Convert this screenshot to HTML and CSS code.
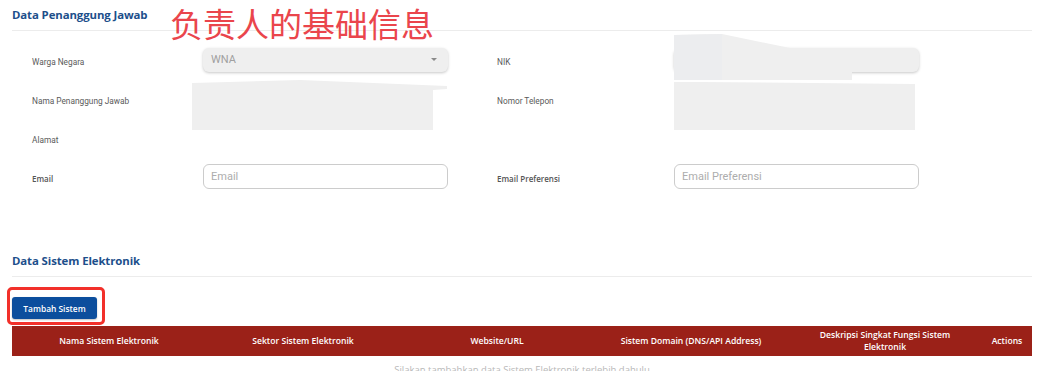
FILE: index.html
```html
<!DOCTYPE html>
<html lang="id">
<head>
<meta charset="utf-8">
<title>Data Penanggung Jawab</title>
<link rel="stylesheet" href="styles.css">
</head>
<body>
<div class="page">
  <section class="section">
    <div class="section-head">
      <h2 class="section-title">Data Penanggung Jawab</h2>
    </div>
    <div class="form-grid">
      <div class="label">Warga Negara</div>
      <div class="field">
        <div class="select"><span class="select-value">WNA</span><span class="caret"></span></div>
      </div>
      <div class="label">NIK</div>
      <div class="field"><div class="select"></div></div>

      <div class="label">Nama Penanggung Jawab</div>
      <div class="field"></div>
      <div class="label">Nomor Telepon</div>
      <div class="field"></div>

      <div class="label">Alamat</div>
      <div class="field"></div>
      <div class="label"></div>
      <div class="field"></div>

      <div class="label label-strong">Email</div>
      <div class="field"><div class="input">Email</div></div>
      <div class="label label-strong">Email Preferensi</div>
      <div class="field"><div class="input">Email Preferensi</div></div>
    </div>
  </section>

  <section class="section section-second">
    <div class="section-head">
      <h2 class="section-title">Data Sistem Elektronik</h2>
    </div>
    <div class="highlight">
      <button class="btn-primary" type="button">Tambah Sistem</button>
    </div>
    <div class="table">
      <div class="thead">
        <div class="th">Nama Sistem Elektronik</div>
        <div class="th">Sektor Sistem Elektronik</div>
        <div class="th">Website/URL</div>
        <div class="th">Sistem Domain (DNS/API Address)</div>
        <div class="th">Deskripsi Singkat Fungsi Sistem Elektronik</div>
        <div class="th">Actions</div>
      </div>
      <div class="empty">Silakan tambahkan data Sistem Elektronik terlebih dahulu</div>
    </div>
  </section>
</div>

<div class="annotation">负责人的基础信息</div>

<svg class="redaction" width="1040" height="371" viewBox="0 0 1040 371" aria-hidden="true">
  <polygon class="blot" points="192,83 300,80 447,86 447,89 433,90 433,130 192,130"/>
  <polygon class="blot" points="674,35 722,34 790,48 674,48"/>
  <polygon class="blot" points="674,72 852,72 852,80 674,80"/>
  <polygon class="blot-cool" points="674,35 722,34 722,80 674,80"/>
  <polygon class="blot" points="674,82 700,82 915,84 915,130 674,130"/>
</svg>
</body>
</html>
```

FILE: styles.css
```css
* {
  box-sizing: border-box;
}

html, body {
  margin: 0;
  padding: 0;
  background: #ffffff;
}

body {
  font-family: Roboto, "Liberation Sans", Arial, sans-serif;
  width: 1040px;
  height: 371px;
  overflow: hidden;
  position: relative;
}

.page {
  padding: 0 8px 0 12px;
}

.section-head {
  height: 31px;
  display: flex;
  align-items: center;
  border-bottom: 1px solid #ececec;
  padding-bottom: 2px;
}

.section-title {
  margin: 0;
  font-family: "Open Sans", "Liberation Sans", sans-serif;
  font-weight: 700;
  font-size: 11.4px;
  color: #1d4f8b;
  letter-spacing: -0.1px;
}

.form-grid {
  display: grid;
  grid-template-columns: 122px 245px 128px 245px;
  grid-auto-rows: 39px;
  column-gap: 49px;
  padding: 11px 0 0 20px;
}

.label {
  display: flex;
  align-items: center;
  font-size: 8.3px;
  color: #5a5a5a;
}

.label-strong {
  font-family: "Open Sans", "Liberation Sans", sans-serif;
  font-weight: 600;
  font-size: 8px;
  color: #555;
}

.field {
  display: flex;
  align-items: center;
}

.select {
  width: 245px;
  height: 24px;
  margin-top: -4px;
  background: #efefef;
  border-radius: 6px;
  box-shadow: 0 1px 3px rgba(0, 0, 0, 0.22);
  display: flex;
  align-items: center;
  justify-content: space-between;
  padding: 0 11px 0 8px;
}

.select-value {
  font-size: 11px;
  color: #a0a0a0;
}

.caret {
  width: 0;
  height: 0;
  border-left: 3.5px solid transparent;
  border-right: 3.5px solid transparent;
  border-top: 3.5px solid #8a8a8a;
}

.input {
  width: 245px;
  height: 25px;
  margin-top: -5px;
  border: 1px solid #cccccc;
  border-radius: 6px;
  display: flex;
  align-items: center;
  padding-left: 7px;
  font-size: 11px;
  color: #adadad;
}

.section-second {
  margin-top: 48px;
}

.highlight {
  display: inline-block;
  margin: 10px 0 1px -5px;
  padding: 7px 5px 3px 2px;
  border: 3px solid #f2302a;
  border-radius: 5px;
  line-height: 0;
}

.btn-primary {
  width: 85px;
  height: 22px;
  border: none;
  border-radius: 3px;
  background: #0c4e9d;
  color: #ffffff;
  font-family: "Open Sans", "Liberation Sans", sans-serif;
  font-weight: 600;
  font-size: 8.4px;
  padding: 0;
  box-shadow: 0 1px 2px rgba(0, 0, 0, 0.25);
}

.table {
  width: 1020px;
}

.thead {
  display: grid;
  grid-template-columns: repeat(5, 194px) 1fr;
  height: 30px;
  background: #9b2118;
}

.th {
  display: flex;
  align-items: center;
  justify-content: center;
  text-align: center;
  padding: 0 14px;
  font-family: "Open Sans", "Liberation Sans", sans-serif;
  font-weight: 600;
  font-size: 8.6px;
  line-height: 12px;
  color: #ffffff;
}

.th:last-child {
  padding: 0;
}

.empty {
  text-align: center;
  padding-top: 7px;
  font-family: "Open Sans", "Liberation Sans", sans-serif;
  font-size: 9.5px;
  line-height: 13px;
  color: #b8b8b8;
}

.annotation {
  position: absolute;
  left: 170px;
  top: 7px;
  font-family: "Noto Sans CJK SC", sans-serif;
  font-size: 33px;
  line-height: 33px;
  color: #ea454c;
  white-space: nowrap;
}

.redaction {
  position: absolute;
  left: 0;
  top: 0;
  pointer-events: none;
}

.blot {
  fill: #efefef;
}

.blot-cool {
  fill: #ecedef;
}
```
